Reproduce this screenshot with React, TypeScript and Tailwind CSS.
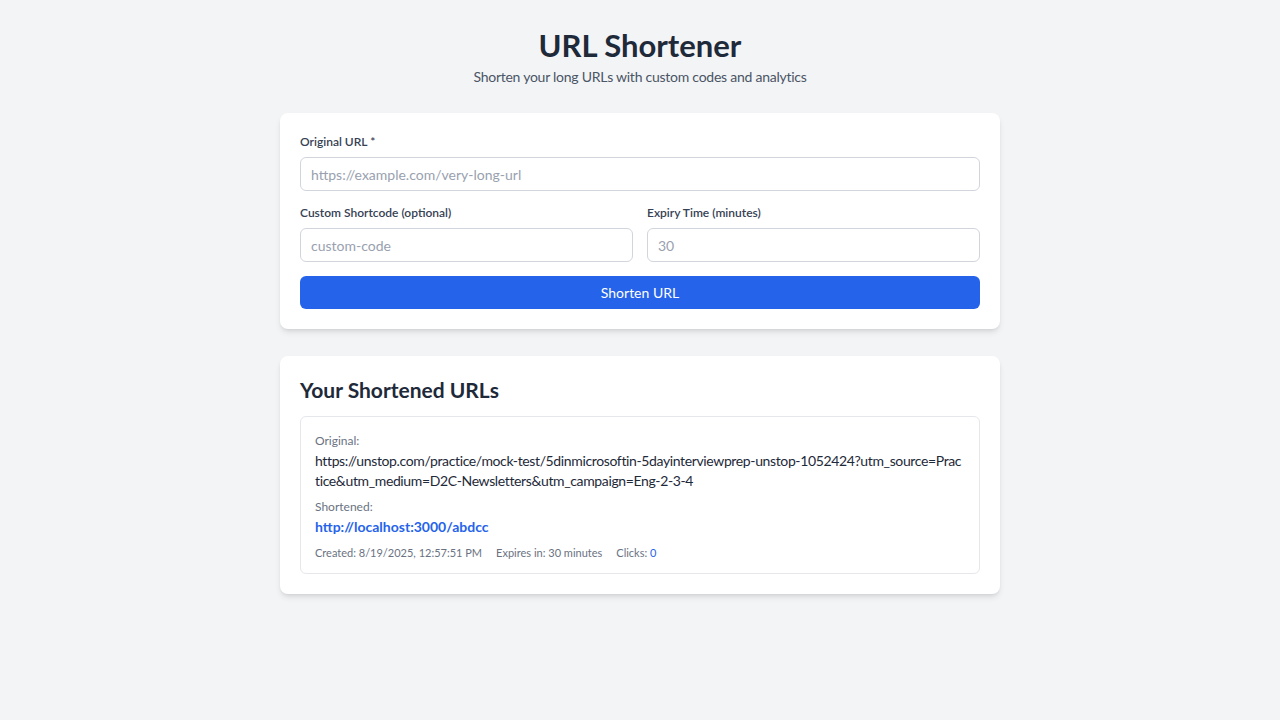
import React, { useState } from 'react';

interface ShortUrl {
  id: string;
  original: string;
  short: string;
  created: string;
  expiresIn: number;
  clicks: number;
}

const urls: ShortUrl[] = [
  {
    id: 'abdcc',
    original:
      'https://unstop.com/practice/mock-test/5dinmicrosoftin-5dayinterviewprep-unstop-1052424?utm_source=Practice&utm_medium=D2C-Newsletters&utm_campaign=Eng-2-3-4',
    short: 'http://localhost:3000/abdcc',
    created: '8/19/2025, 12:57:51 PM',
    expiresIn: 30,
    clicks: 0,
  },
];

function Field({
  label,
  placeholder,
  value,
  onChange,
}: {
  label: string;
  placeholder: string;
  value: string;
  onChange: (v: string) => void;
}) {
  return (
    <div className="flex flex-col">
      <label className="mb-1.5 text-xs leading-[18px] font-semibold text-gray-700">{label}</label>
      <input
        type="text"
        value={value}
        onChange={(e) => onChange(e.target.value)}
        placeholder={placeholder}
        className="h-[34px] w-full rounded-md border border-gray-300 bg-white px-2.5 text-sm text-gray-800 placeholder:text-gray-400 focus:outline-none focus:ring-2 focus:ring-blue-500"
      />
    </div>
  );
}

export default function App() {
  const [url, setUrl] = useState('');
  const [code, setCode] = useState('');
  const [expiry, setExpiry] = useState('');

  return (
    <div
      className="min-h-screen bg-[#f3f4f6] pt-[27px] pb-10"
      style={{ fontFamily: 'Lato, "Noto Sans", sans-serif' }}
    >
      <div className="mx-auto w-[720px]">
        {/* Header */}
        <div className="mb-[26px] text-center">
          <h1 className="text-[31px] leading-9 font-bold text-gray-800">URL Shortener</h1>
          <p className="mt-1 text-sm tracking-[-0.25px] text-gray-600">
            Shorten your long URLs with custom codes and analytics
          </p>
        </div>

        {/* Form card */}
        <div className="mb-[27px] rounded-lg bg-white p-5 shadow-md">
          <div className="flex flex-col gap-[13px]">
            <Field
              label="Original URL *"
              placeholder="https://example.com/very-long-url"
              value={url}
              onChange={setUrl}
            />
            <div className="grid grid-cols-2 gap-3.5">
              <Field label="Custom Shortcode (optional)" placeholder="custom-code" value={code} onChange={setCode} />
              <Field label="Expiry Time (minutes)" placeholder="30" value={expiry} onChange={setExpiry} />
            </div>
            <button
              type="button"
              className="mt-px h-[33px] w-full rounded-md bg-[#2563eb] text-sm text-white hover:bg-blue-700"
            >
              Shorten URL
            </button>
          </div>
        </div>

        {/* List card */}
        <div className="rounded-lg bg-white p-5 shadow-md">
          <h2 className="mb-3 text-[21px] leading-7 font-bold text-gray-800">Your Shortened URLs</h2>
          {urls.map((u) => (
            <div key={u.id} className="rounded-md border border-gray-200 px-3.5 pt-3.5 pb-3">
              <div className="text-xs leading-5 text-gray-500">Original:</div>
              <div className="text-sm leading-5 tracking-[-0.37px] break-all text-gray-800">{u.original}</div>
              <div className="mt-1.5 text-xs leading-5 text-gray-500">Shortened:</div>
              <a href="#" className="block text-sm leading-5 font-bold text-[#2563eb]">
                {u.short}
              </a>
              <div className="mt-2 flex gap-3.5 text-[11px] leading-4 text-gray-500">
                <span>Created: {u.created}</span>
                <span>Expires in: {u.expiresIn} minutes</span>
                <span>
                  Clicks: <span className="text-[#2563eb]">{u.clicks}</span>
                </span>
              </div>
            </div>
          ))}
        </div>
      </div>
    </div>
  );
}
